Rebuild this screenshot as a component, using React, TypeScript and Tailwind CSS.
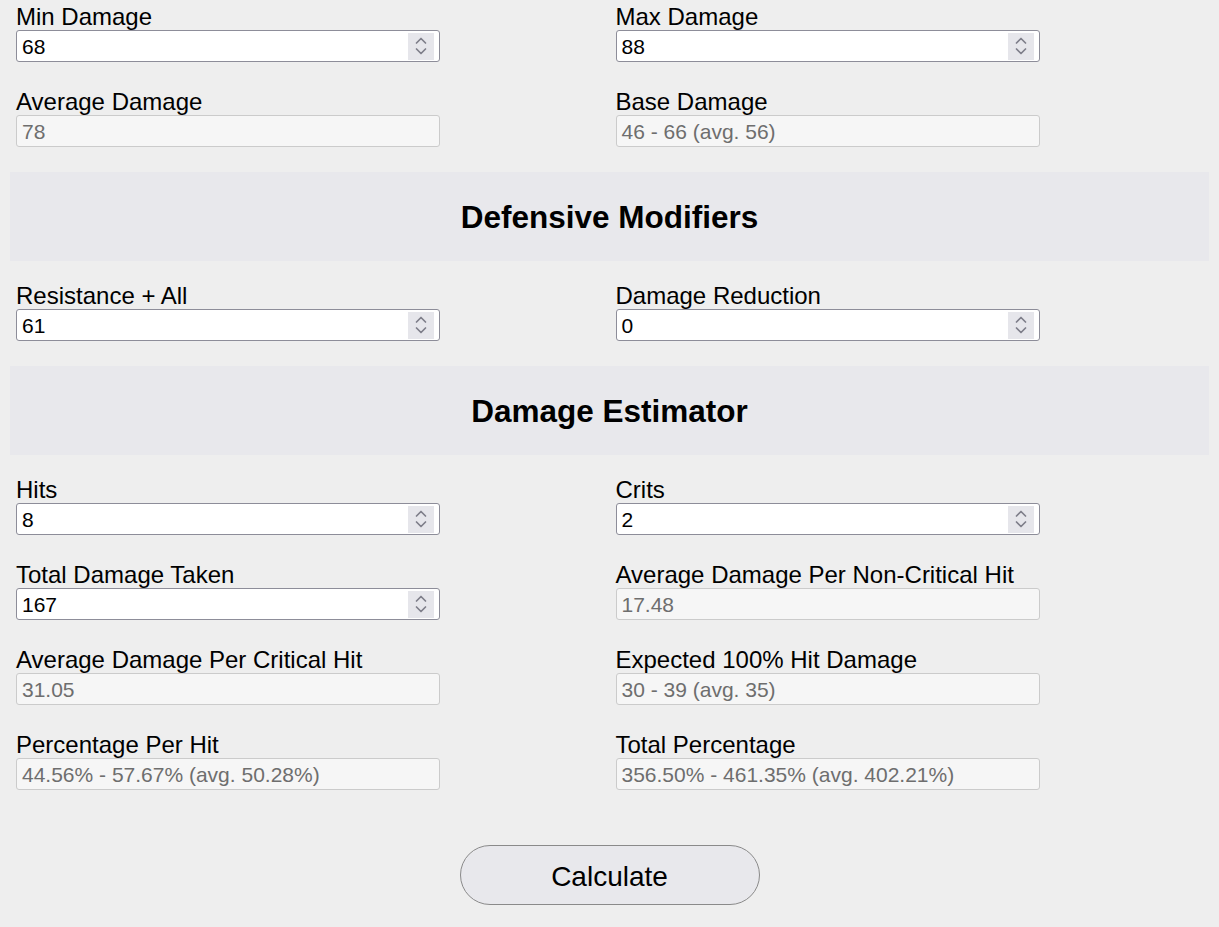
import React from 'react';

type Field = {
  label: string;
  value: string;
  editable?: boolean;
};

const baseFields: Field[] = [
  { label: 'Min Damage', value: '68', editable: true },
  { label: 'Max Damage', value: '88', editable: true },
  { label: 'Average Damage', value: '78' },
  { label: 'Base Damage', value: '46 - 66 (avg. 56)' },
];

const defensiveFields: Field[] = [
  { label: 'Resistance + All', value: '61', editable: true },
  { label: 'Damage Reduction', value: '0', editable: true },
];

const estimatorFields: Field[] = [
  { label: 'Hits', value: '8', editable: true },
  { label: 'Crits', value: '2', editable: true },
  { label: 'Total Damage Taken', value: '167', editable: true },
  { label: 'Average Damage Per Non-Critical Hit', value: '17.48' },
  { label: 'Average Damage Per Critical Hit', value: '31.05' },
  { label: 'Expected 100% Hit Damage', value: '30 - 39 (avg. 35)' },
  { label: 'Percentage Per Hit', value: '44.56% - 57.67% (avg. 50.28%)' },
  { label: 'Total Percentage', value: '356.50% - 461.35% (avg. 402.21%)' },
];

function Spinner() {
  return (
    <div className="w-[26px] h-[27px] mr-[5px] bg-[#e6e6eb] flex items-center justify-center">
      <svg width="14" height="22" viewBox="0 0 14 22" fill="none">
        <path d="M2.5 8 L7 3.5 L11.5 8" stroke="#7e7e8a" strokeWidth="1.7" strokeLinecap="round" strokeLinejoin="round" />
        <path d="M2.5 14 L7 18.5 L11.5 14" stroke="#7e7e8a" strokeWidth="1.7" strokeLinecap="round" strokeLinejoin="round" />
      </svg>
    </div>
  );
}

function FieldBox({ field }: { field: Field }) {
  return (
    <div className="pl-[6px]">
      <div className="h-[28px] text-[24px] leading-[30px] text-black whitespace-nowrap">{field.label}</div>
      {field.editable ? (
        <div className="w-[424px] h-[32px] flex items-center bg-white border border-[#8d8d99] rounded-[3px]">
          <span className="flex-1 pl-[5px] pt-[2px] text-[21px] leading-[28px] text-black">{field.value}</span>
          <Spinner />
        </div>
      ) : (
        <div className="w-[424px] h-[32px] flex items-center bg-[#f6f6f6] border border-[#cbcbcb] rounded-[3px]">
          <span className="flex-1 pl-[5px] pt-[2px] text-[21px] leading-[28px] text-[#6e6e6e] whitespace-nowrap">
            {field.value}
          </span>
        </div>
      )}
    </div>
  );
}

function FieldGrid({ fields }: { fields: Field[] }) {
  return (
    <div className="grid grid-cols-2 gap-y-[25px]">
      {fields.map((f) => (
        <FieldBox key={f.label} field={f} />
      ))}
    </div>
  );
}

function Band({ title }: { title: string }) {
  return (
    <div className="mt-[25px] mb-[20px] h-[89px] bg-[#e8e8ec] flex items-center justify-center">
      <h2 className="text-[31.5px] font-bold text-black pt-[3px]">{title}</h2>
    </div>
  );
}

export default function App() {
  return (
    <div
      className="min-h-[927px] bg-[#eeeeee] px-[10px] pt-[2px]"
      style={{ fontFamily: '"Liberation Sans", Arial, sans-serif' }}
    >
      <FieldGrid fields={baseFields} />
      <Band title="Defensive Modifiers" />
      <FieldGrid fields={defensiveFields} />
      <Band title="Damage Estimator" />
      <FieldGrid fields={estimatorFields} />
      <div className="flex justify-center mt-[55px]">
        <button className="w-[300px] h-[60px] rounded-full border border-[#8a8a8a] bg-[#e8e8ec] text-[28px] text-black pt-[3px]">
          Calculate
        </button>
      </div>
    </div>
  );
}
